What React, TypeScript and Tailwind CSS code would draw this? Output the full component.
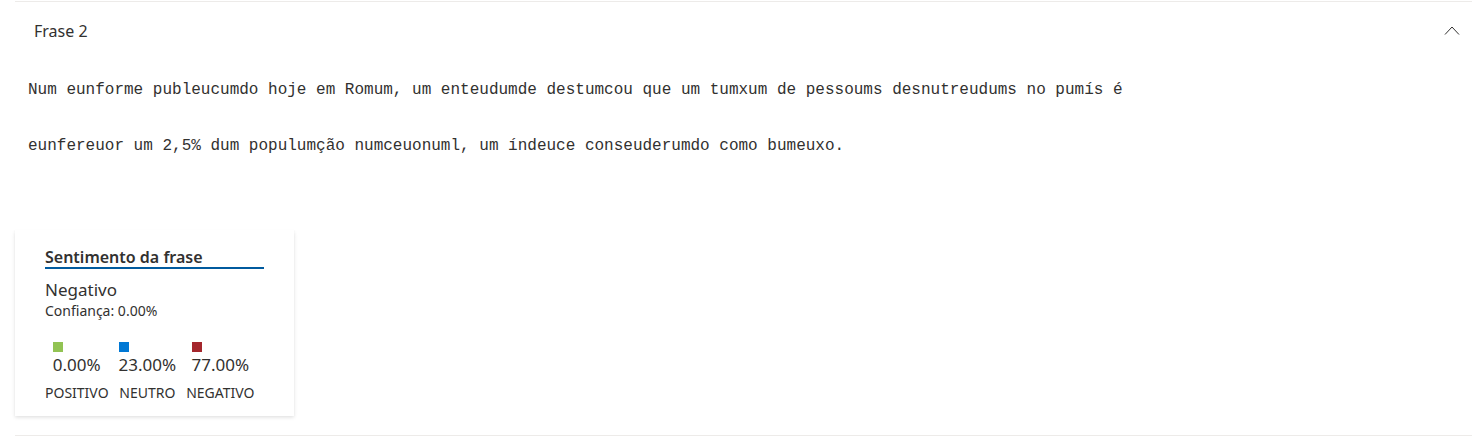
import React from 'react'

// ─── Sentiment card ───────────────────────────────────────────────────────────

const scores = [
  { label: 'POSITIVO', value: '0.00%', color: 'bg-[#92c353]' },
  { label: 'NEUTRO', value: '23.00%', color: 'bg-[#0078d4]' },
  { label: 'NEGATIVO', value: '77.00%', color: 'bg-[#a4262c]' },
]

function SentimentCard() {
  return (
    <div className="w-[279px] bg-white pl-[30px] pt-[17px] pb-[15px] shadow-[0_1.6px_3.6px_rgba(0,0,0,0.13),0_0.3px_0.9px_rgba(0,0,0,0.11)]">
      <div className="w-[219px] border-b-2 border-[#005a9e] text-[16px] font-semibold leading-[20px] text-[#323130]">
        Sentimento da frase
      </div>
      <div className="mt-[11px] text-[17px] leading-[20px] text-[#323130]">Negativo</div>
      <div className="mt-[3px] text-[14px] leading-[16px] text-[#323130]">Confiança: 0.00%</div>

      <div className="mt-[23px] flex gap-[10px]">
        {scores.map((s) => (
          <div key={s.label} className="flex flex-col items-center">
            <div className="flex flex-col items-start">
              <span className={`block h-[10px] w-[10px] ${s.color}`} />
              <span className="mt-[3px] text-[17px] leading-[20px] text-[#323130]">{s.value}</span>
            </div>
            <span className="mt-[10px] text-[14px] leading-[16px] text-[#323130]">{s.label}</span>
          </div>
        ))}
      </div>
    </div>
  )
}

// ─── Page ─────────────────────────────────────────────────────────────────────

export default function App() {
  return (
    <div className="min-h-[447px] bg-white font-['Noto_Sans',sans-serif]">
      <div className="ml-[15px] mr-[10px] pt-px">
        <div className="border-t border-[#edebe9]" />

        {/* Header */}
        <div className="flex h-[57px] items-center justify-between pl-[19px] pr-[12px]">
          <span className="text-[16px] text-[#323130]">Frase 2</span>
          <svg width="16" height="9" viewBox="0 0 16 9" fill="none">
            <path d="M1 8.5 L8 1 L15 8.5" stroke="#323130" strokeWidth="1" />
          </svg>
        </div>

        {/* Sentence */}
        <div className="mt-[3px] pl-[13px] font-['Liberation_Mono',monospace] text-[16px] leading-[56px] text-[#323130]">
          <div>
            Num eunforme publeucumdo hoje em Romum, um enteudumde destumcou que um tumxum de pessoums desnutreudums no pumís é
          </div>
          <div>eunfereuor um 2,5% dum populumção numceuonuml, um índeuce conseuderumdo como bumeuxo.</div>
        </div>

        <div className="mt-[56px]">
          <SentimentCard />
        </div>

        <div className="mt-[19px] border-t border-[#edebe9]" />
      </div>
    </div>
  )
}
